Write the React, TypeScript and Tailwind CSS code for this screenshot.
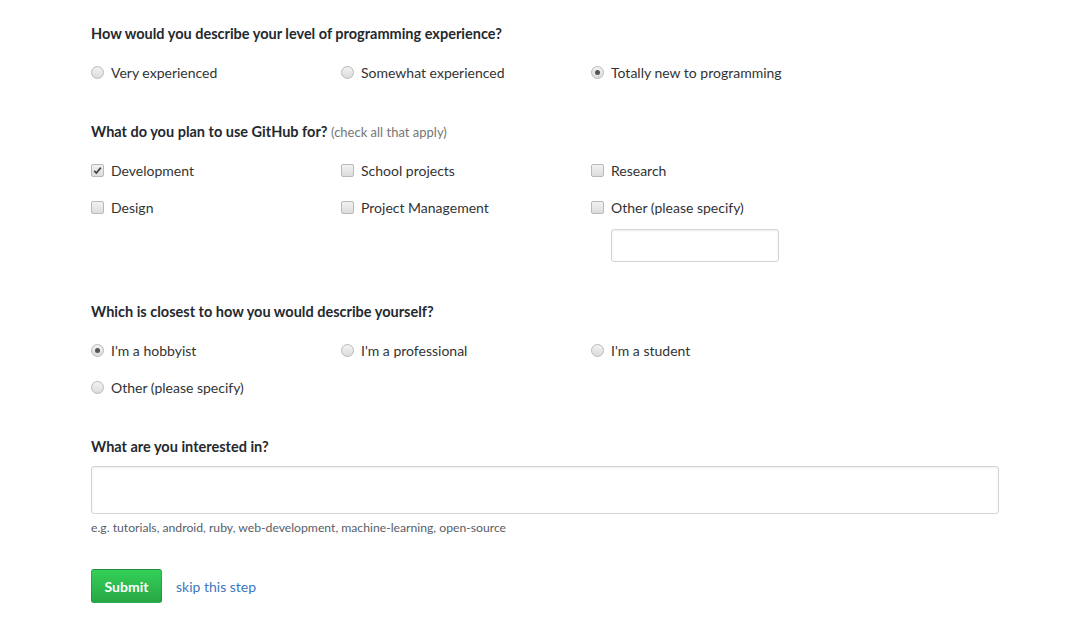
const font = { fontFamily: '"Lato", "Liberation Sans", sans-serif' };

function Radio({ checked = false }: { checked?: boolean }) {
  return (
    <span className="flex items-center justify-center w-[13px] h-[13px] rounded-full border border-[#b9b9b9] bg-gradient-to-b from-[#f2f2f2] to-[#dcdcdc] shrink-0">
      {checked && <span className="w-[5px] h-[5px] rounded-full bg-[#555]" />}
    </span>
  );
}

function Check({ checked = false }: { checked?: boolean }) {
  return (
    <span className="flex items-center justify-center w-[13px] h-[13px] rounded-[2px] border border-[#b9b9b9] bg-gradient-to-b from-[#f2f2f2] to-[#dcdcdc] shrink-0">
      {checked && (
        <svg width="9" height="9" viewBox="0 0 9 9">
          <path d="M1.2 4.8 L3.4 7 L7.8 1.6" stroke="#444" strokeWidth="1.8" fill="none" />
        </svg>
      )}
    </span>
  );
}

function Option({ label, kind, checked }: { label: string; kind: "radio" | "check"; checked?: boolean }) {
  return (
    <label className="flex items-center gap-[7px] h-5 text-[14px] text-[#333]">
      {kind === "radio" ? <Radio checked={checked} /> : <Check checked={checked} />}
      <span>{label}</span>
    </label>
  );
}

export default function App() {
  return (
    <div className="min-h-[631px] bg-white pl-[91px] pt-[24px]" style={font}>
      {/* experience */}
      <h2 className="h-5 leading-5 text-[14.5px] font-bold text-[#24292e]">
        How would you describe your level of programming experience?
      </h2>
      <div className="grid grid-cols-[250px_250px_250px] mt-[18px]">
        <Option kind="radio" label="Very experienced" />
        <Option kind="radio" label="Somewhat experienced" />
        <Option kind="radio" label="Totally new to programming" checked />
      </div>

      {/* uses */}
      <h2 className="h-5 leading-5 text-[14.5px] font-bold text-[#24292e] mt-[40px]">
        What do you plan to use GitHub for?{" "}
        <span className="font-normal text-[13px] text-[#767676]">(check all that apply)</span>
      </h2>
      <div className="grid grid-cols-[250px_250px_250px] gap-y-[17px] mt-[18px]">
        <Option kind="check" label="Development" checked />
        <Option kind="check" label="School projects" />
        <Option kind="check" label="Research" />
        <Option kind="check" label="Design" />
        <Option kind="check" label="Project Management" />
        <div>
          <Option kind="check" label="Other (please specify)" />
          <input
            type="text"
            className="block mt-[12px] ml-[20px] w-[168px] h-[33px] rounded-[3px] border border-[#d1d5da] shadow-[inset_0_1px_2px_rgba(27,31,35,0.075)] outline-none"
          />
        </div>
      </div>

      {/* describe */}
      <h2 className="h-5 leading-5 text-[14.5px] font-bold text-[#24292e] mt-[40px]">
        Which is closest to how you would describe yourself?
      </h2>
      <div className="grid grid-cols-[250px_250px_250px] gap-y-[17px] mt-[18px]">
        <Option kind="radio" label="I'm a hobbyist" checked />
        <Option kind="radio" label="I'm a professional" />
        <Option kind="radio" label="I'm a student" />
        <Option kind="radio" label="Other (please specify)" />
      </div>

      {/* interests */}
      <h2 className="h-5 leading-5 text-[14.5px] font-bold text-[#24292e] mt-[40px]">
        What are you interested in?
      </h2>
      <input
        type="text"
        className="block mt-[9px] w-[908px] h-[48px] rounded-[3px] border border-[#d1d5da] shadow-[inset_0_1px_2px_rgba(27,31,35,0.075)] outline-none"
      />
      <p className="mt-[6px] h-4 leading-4 text-[12.2px] text-[#586069]">
        e.g. tutorials, android, ruby, web-development, machine-learning, open-source
      </p>

      <div className="flex items-center gap-[14px] mt-[33px]">
        <button className="h-[34px] w-[71px] rounded-[3px] border border-[rgba(27,31,35,0.2)] bg-gradient-to-b from-[#34d058] to-[#28a745] text-white text-[14px] font-bold">
          Submit
        </button>
        <a href="#" className="text-[14px] text-[#4078c0]">
          skip this step
        </a>
      </div>
    </div>
  );
}
